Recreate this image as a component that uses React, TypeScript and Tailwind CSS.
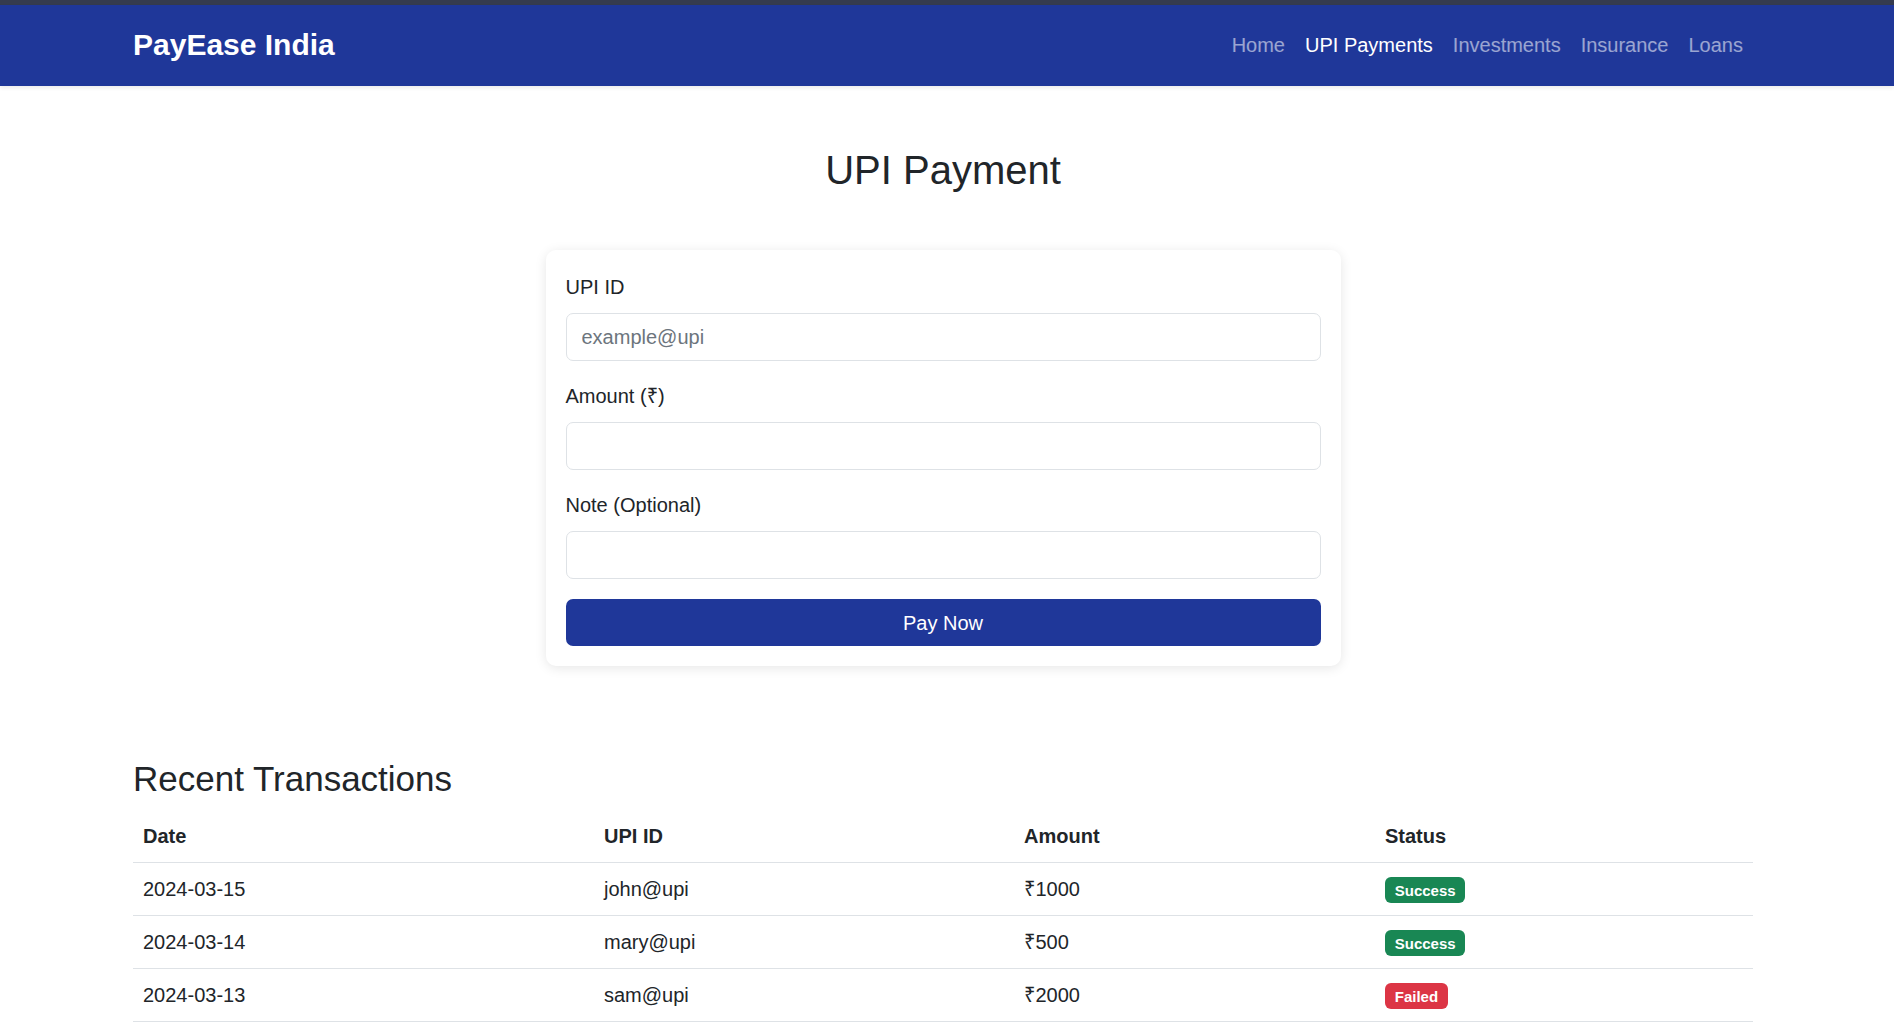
const transactions = [
  { date: "2024-03-15", upi: "john@upi", amount: "₹1000", status: "Success" },
  { date: "2024-03-14", upi: "mary@upi", amount: "₹500", status: "Success" },
  { date: "2024-03-13", upi: "sam@upi", amount: "₹2000", status: "Failed" },
];

const links = ["Home", "UPI Payments", "Investments", "Insurance", "Loans"];

function Field({ label, placeholder }: { label: string; placeholder?: string }) {
  return (
    <div className="mb-5">
      <label className="block text-[20px] leading-[30px] mb-[11px] text-[#212529]">{label}</label>
      <input
        type="text"
        placeholder={placeholder}
        className="block w-full h-[48px] px-[15px] text-[20px] text-[#212529] placeholder:text-[#6c757d] bg-white border border-[#dee2e6] rounded-[7px] outline-none"
      />
    </div>
  );
}

export default function App() {
  return (
    <div className="min-h-screen bg-white text-[#212529] font-['Liberation_Sans','Noto_Sans',sans-serif]">
      {/* window strip */}
      <div className="h-[5px] bg-[#353b4e]" />

      {/* navbar */}
      <nav className="h-[81px] bg-[#1f3799] shadow-[0_2px_4px_rgba(0,0,0,0.08)] pr-2 pb-[2px]">
        <div className="mx-auto w-[1620px] h-full flex items-center justify-between">
          <span className="text-[30px] leading-[45px] font-bold text-white">PayEase India</span>
          <ul className="flex">
            {links.map((l) => (
              <li key={l}>
                <a
                  href="#"
                  className={
                    l === "UPI Payments"
                      ? "block px-[10px] text-[20px] leading-[30px] text-white"
                      : "block px-[10px] text-[20px] leading-[30px] text-white/55"
                  }
                >
                  {l}
                </a>
              </li>
            ))}
          </ul>
        </div>
      </nav>

      <main className="pr-2">
        <div className="mx-auto w-[1620px] pt-[60px]">
          <h1 className="text-center text-[40px] leading-[48px] font-normal mb-[56px]">UPI Payment</h1>

          {/* payment form */}
          <div className="mx-auto w-[795px] bg-white rounded-[10px] shadow-[0_2px_12px_rgba(0,0,0,0.1)] pt-[22px] px-5 pb-5">
            <Field label="UPI ID" placeholder="example@upi" />
            <Field label="Amount (₹)" />
            <Field label="Note (Optional)" />
            <button className="w-full h-[47px] rounded-[7px] bg-[#1f3799] text-white text-[20px]">Pay Now</button>
          </div>

          {/* transactions */}
          <h2 className="mt-[92px] mb-[10px] text-[35px] leading-[42px] font-normal">Recent Transactions</h2>
          <table className="w-full border-collapse text-[20px] leading-[30px]">
            <thead>
              <tr className="border-b border-[#dee2e6]">
                <th className="w-[461px] h-[52px] px-[10px] text-left font-bold align-middle">Date</th>
                <th className="w-[420px] h-[52px] px-[10px] text-left font-bold align-middle">UPI ID</th>
                <th className="w-[361px] h-[52px] px-[10px] text-left font-bold align-middle">Amount</th>
                <th className="h-[52px] px-[10px] text-left font-bold align-middle">Status</th>
              </tr>
            </thead>
            <tbody>
              {transactions.map((t) => (
                <tr key={t.date} className="border-b border-[#dee2e6]">
                  <td className="h-[53px] px-[10px] align-middle">{t.date}</td>
                  <td className="h-[53px] px-[10px] align-middle">{t.upi}</td>
                  <td className="h-[53px] px-[10px] align-middle">{t.amount}</td>
                  <td className="h-[53px] px-[10px] align-middle">
                    <span
                      className={
                        t.status === "Success"
                          ? "inline-block px-[9.75px] py-[5.25px] text-[15px] leading-[15px] font-bold text-white rounded-[6px] bg-[#198754]"
                          : "inline-block px-[9.75px] py-[5.25px] text-[15px] leading-[15px] font-bold text-white rounded-[6px] bg-[#dc3545]"
                      }
                    >
                      {t.status}
                    </span>
                  </td>
                </tr>
              ))}
            </tbody>
          </table>
        </div>
      </main>
    </div>
  );
}
